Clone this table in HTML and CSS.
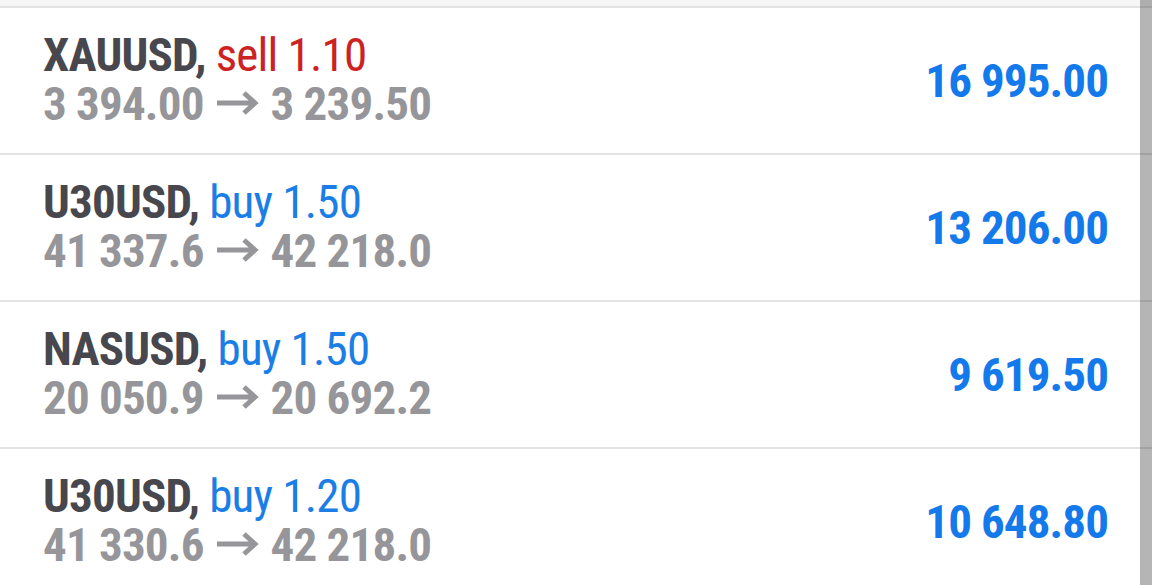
FILE: index.html
```html
<!DOCTYPE html>
<html lang="en">
<head>
  <meta charset="UTF-8" />
  <meta name="viewport" content="width=device-width, initial-scale=1.0" />
  <title>Trades</title>
  <link rel="stylesheet" href="styles.css">
</head>
<body>

  <div class="lista">
    <!-- fila anterior, solo se ve el borde -->
    <div class="fila-cortada"></div>

    <div class="fila">
      <div class="info">
        <div class="titulo">XAUUSD, <span class="sell">sell 1.10</span></div>
        <div class="precios">3 394.00<svg class="flecha" viewBox="0 0 43 24"><path d="M1 12 H39 M28 2 L39 12 L28 22"/></svg>3 239.50</div>
      </div>
      <div class="profit">16 995.00</div>
    </div>

    <div class="fila">
      <div class="info">
        <div class="titulo">U30USD, <span class="buy">buy 1.50</span></div>
        <div class="precios">41 337.6<svg class="flecha" viewBox="0 0 43 24"><path d="M1 12 H39 M28 2 L39 12 L28 22"/></svg>42 218.0</div>
      </div>
      <div class="profit">13 206.00</div>
    </div>

    <div class="fila">
      <div class="info">
        <div class="titulo">NASUSD, <span class="buy">buy 1.50</span></div>
        <div class="precios">20 050.9<svg class="flecha" viewBox="0 0 43 24"><path d="M1 12 H39 M28 2 L39 12 L28 22"/></svg>20 692.2</div>
      </div>
      <div class="profit">9 619.50</div>
    </div>

    <div class="fila">
      <div class="info">
        <div class="titulo">U30USD, <span class="buy">buy 1.20</span></div>
        <div class="precios">41 330.6<svg class="flecha" viewBox="0 0 43 24"><path d="M1 12 H39 M28 2 L39 12 L28 22"/></svg>42 218.0</div>
      </div>
      <div class="profit">10 648.80</div>
    </div>

    <!-- barra de scroll -->
    <div class="scroll"></div>
  </div>

</body>
</html>
```

FILE: styles.css
```css
body {
  margin: 0;
  background-color: white;
  font-family: Roboto, "Liberation Sans", sans-serif;
  font-stretch: condensed;
  overflow: hidden;
}

.lista {
  position: relative;
  width: 1152px;
  height: 585px;
  overflow: hidden;
}

.fila-cortada {
  height: 6px;
  background-color: #f6f6f6;
  border-bottom: 2px solid #e3e3e3;
}

.fila {
  display: flex;
  justify-content: space-between;
  align-items: center;
  height: 145px;
  padding: 0 44px 0 43px;
  border-bottom: 2px solid #e3e3e3;
}

.info {
  font-size: 47px;
  line-height: 49px;
  letter-spacing: -0.8px;
  margin-top: -3px;
}

.titulo {
  color: #47474d;
  font-weight: bold;
}

.titulo span {
  font-weight: normal;
}

.sell {
  color: #cc2222;
}

.buy {
  color: #1a7ee6;
}

.precios {
  color: #96969a;
  font-weight: bold;
}

.flecha {
  width: 43px;
  height: 24px;
  margin: 0 12px 0 12px;
  vertical-align: 5px;
}

.flecha path {
  fill: none;
  stroke: #96969a;
  stroke-width: 5;
}

.profit {
  color: #1479ea;
  font-size: 47px;
  line-height: 49px;
  letter-spacing: -0.9px;
  font-weight: bold;
}

.scroll {
  position: absolute;
  top: 0;
  right: 0;
  width: 12px;
  height: 100%;
  background-color: rgba(0,0,0,0.29);
}
```
